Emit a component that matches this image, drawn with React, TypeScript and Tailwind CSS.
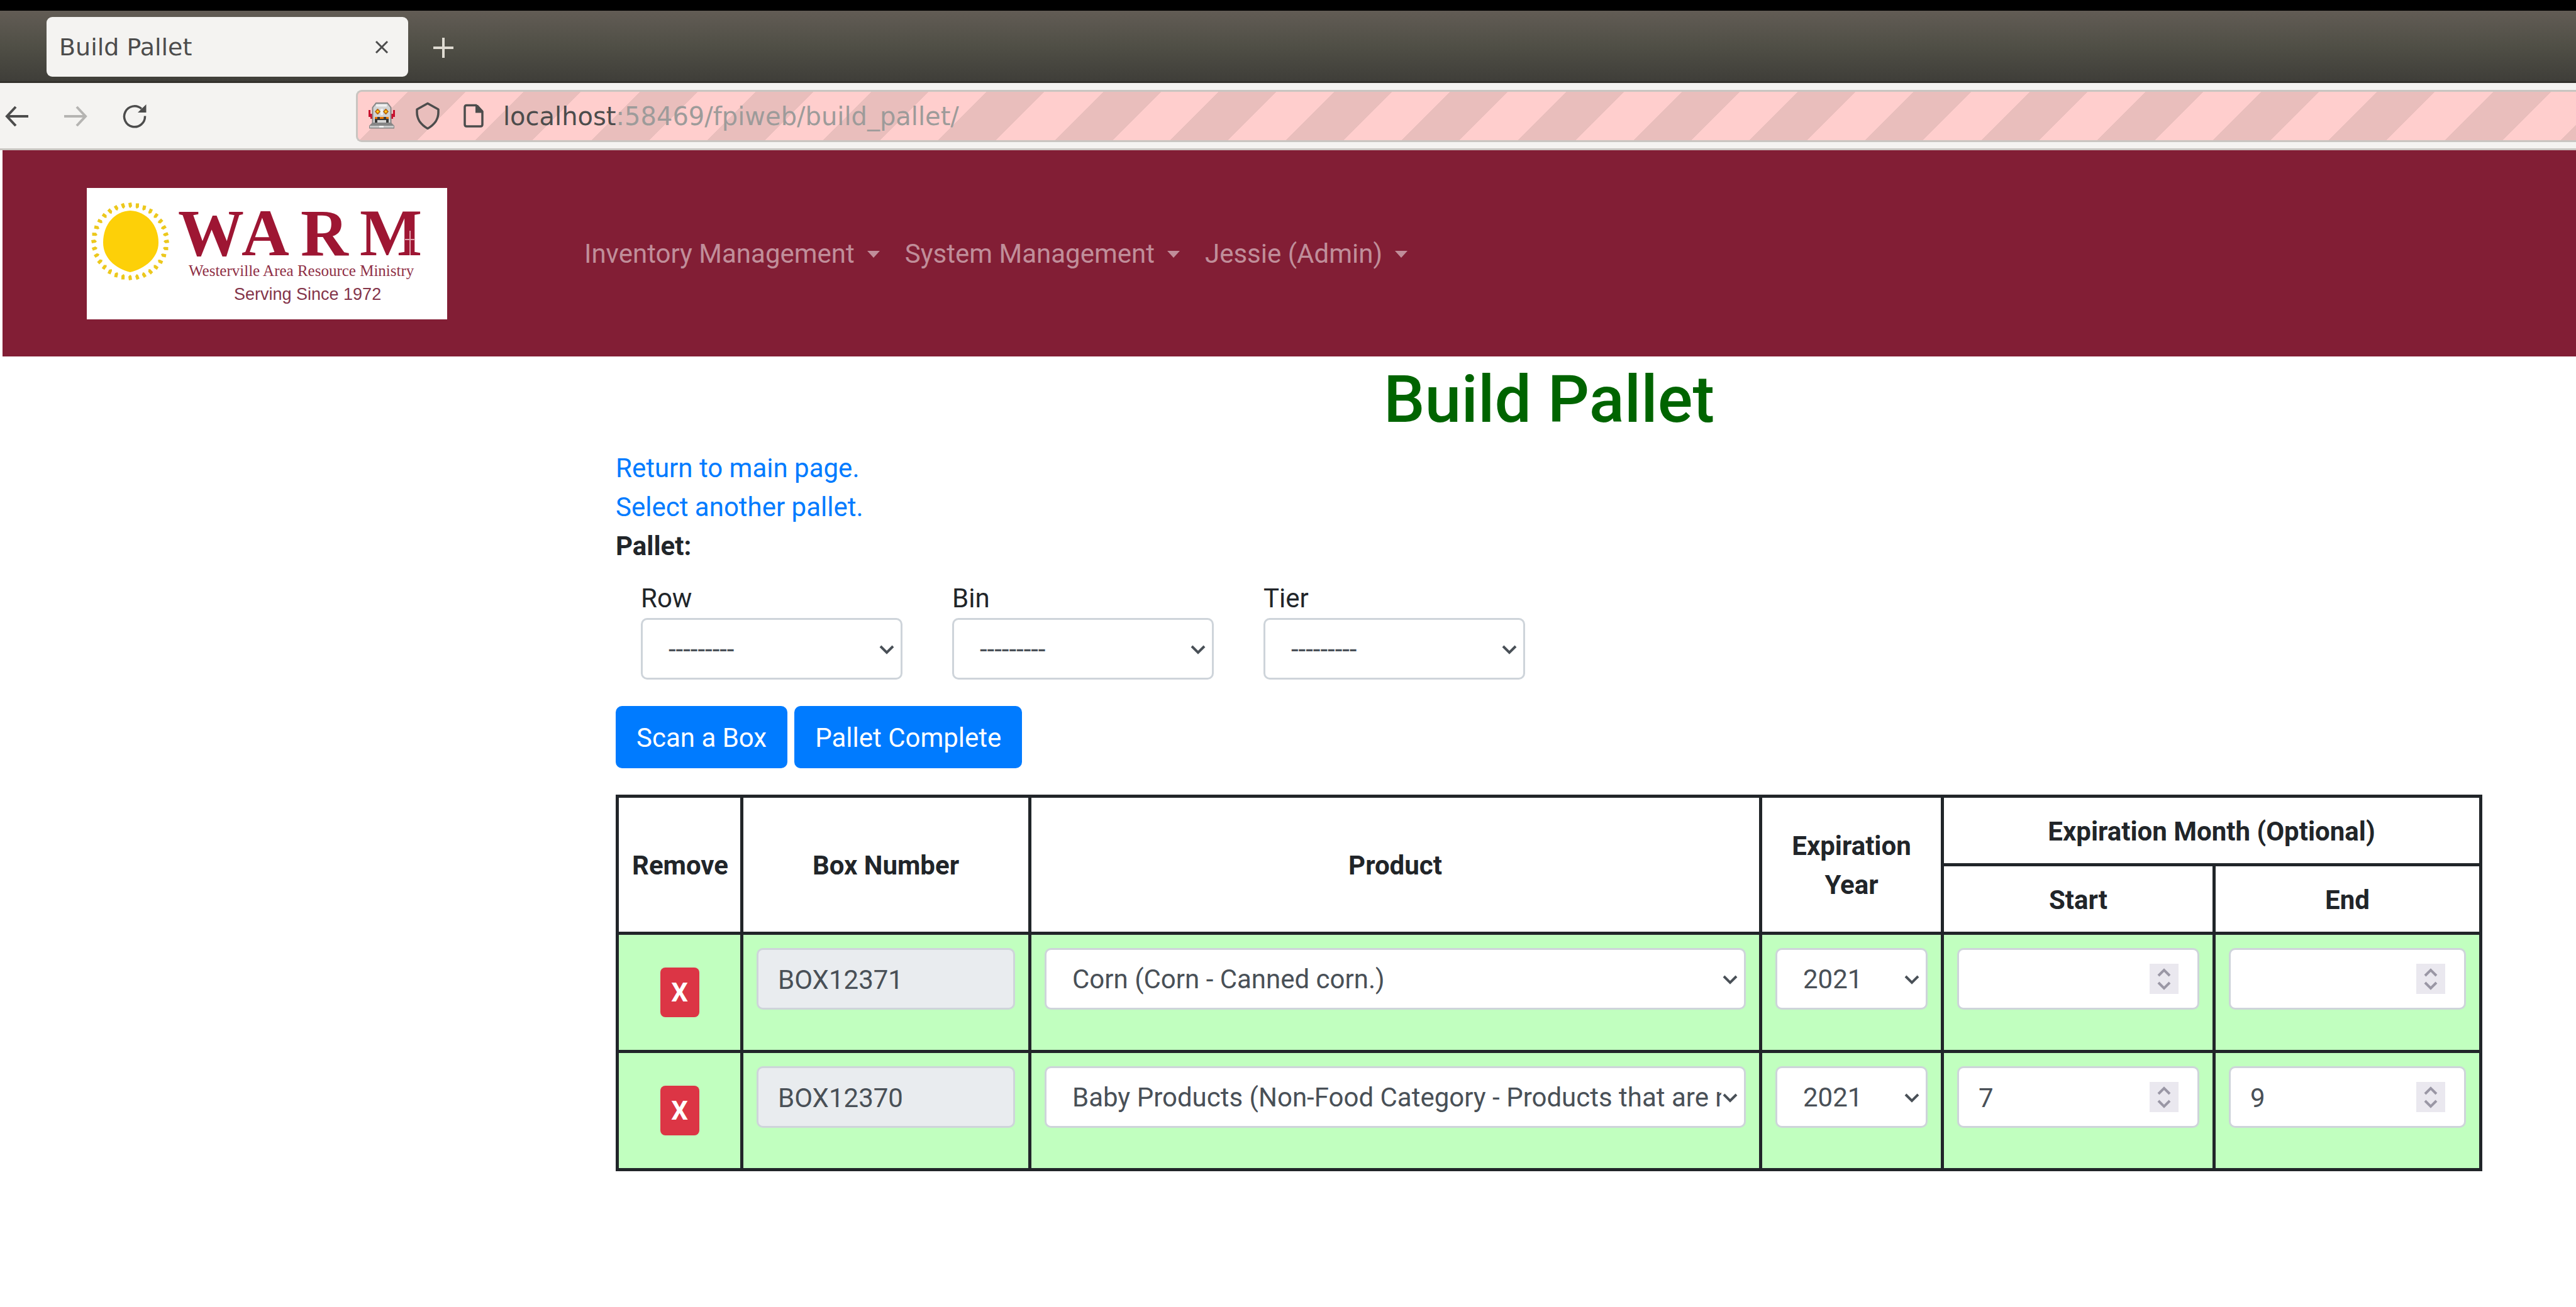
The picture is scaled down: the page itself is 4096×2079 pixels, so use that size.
import type { ReactNode } from "react";

const sans = "font-['Roboto',sans-serif]";

const STRIPES =
  "bg-[repeating-linear-gradient(135deg,#ffcecd_0px,#ffcecd_56px,#e9bebc_56px,#e9bebc_121px,#ffcecd_121px,#ffcecd_186px,#e9bebc_186px,#e9bebc_251px,#ffcecd_251px,#ffcecd_317px,#e9bebc_317px,#e9bebc_382px,#ffcecd_382px,#ffcecd_447px,#e9bebc_447px,#e9bebc_512px,#ffcecd_512px,#ffcecd_521px)]";

function Robot() {
  return (
    <svg viewBox="0 0 42 42" className="h-[42px] w-[42px]" aria-hidden="true">
      <path d="M0 12h3v6h3v8H3v-3H0zM42 12h-3v6h-3v8h3v-3h3z" fill="#c8102e" />
      <path d="M6.500 34V8L12 1h18l5.500 7v26z" fill="#d3d3d3" stroke="#858585" strokeWidth="2" />
      <path d="M12 5h17" stroke="#f2f2f2" strokeWidth="3" />
      <path d="M19 10h4v10h-4z" fill="#f0f0f0" />
      <path d="M14.500 10l4 4.500-4 4.500-4-4.500zM27.500 10l4 4.500-4 4.500-4-4.500z" fill="#d86f00" stroke="#9a5a12" strokeWidth="1" />
      <circle cx="14.500" cy="14.500" r="1.800" fill="#ffd21f" />
      <circle cx="27.500" cy="14.500" r="1.800" fill="#ffd21f" />
      <path d="M10 23h22v9H10z" fill="#3a3a3a" />
      <path d="M10 23h4v3h-4zM18 23h6v3h-6zM28 23h4v3h-4z" fill="#f07800" />
      <path d="M14 28h14v4H14z" fill="#d6d6d6" />
      <path d="M6 32h30l5 5v4.500H1V37z" fill="#868686" />
      <path d="M2 37h38v3H2z" fill="#c9c9c9" />
      <path d="M17 37h7v3h-7z" fill="#f0f0f0" />
    </svg>
  );
}

function BrowserChrome() {
  return (
    <header className="font-['DejaVu_Sans',sans-serif]">
      <div className="h-[17px] bg-black" />
      <div className="flex h-[115px] items-start border-b-3 border-[#33312c] bg-linear-to-b from-[#625c55] via-[#504f46] to-[#3f3e39] pl-[74px] pt-[10px]">
        <div className="flex h-[95px] w-[575px] items-center justify-between rounded-[9px] bg-[#f4f3f1] pl-[20px] pr-[31px] text-[38px] text-[#4c4c4c]">
          <span>Build Pallet</span>
          <button type="button" aria-label="Close tab">
            <svg viewBox="0 0 22 22" className="size-[22px]" fill="none" stroke="#4c4c4c" strokeWidth="3">
              <path d="M2 2l18 18M20 2L2 20" />
            </svg>
          </button>
        </div>
        <button type="button" aria-label="New tab" className="ml-[40px] mt-[33px]">
          <svg viewBox="0 0 32 32" className="size-[32px]" stroke="#dfdbd2" strokeWidth="4">
            <path d="M16 0v32M0 16h32" />
          </svg>
        </button>
      </div>
      <div className="flex h-[107px] items-center border-b-3 border-[#c9c5c1] bg-[#f4f3f1] pl-[8px]">
        <button type="button" aria-label="Back">
          <svg viewBox="0 0 37 34" className="h-[34px] w-[37px]" fill="none" stroke="#4c4c4c" strokeWidth="4">
            <path d="M3 18h34M17 3L3 18l14 15" />
          </svg>
        </button>
        <button type="button" aria-label="Forward" className="ml-[57px]">
          <svg viewBox="0 0 37 34" className="h-[34px] w-[37px]" fill="none" stroke="#b5b4b2" strokeWidth="4">
            <path d="M0 18h34M20 3l14 15-14 15" />
          </svg>
        </button>
        <button type="button" aria-label="Reload" className="ml-[56px]">
          <svg viewBox="0 0 38 40" className="h-[40px] w-[38px]" fill="none">
            <path d="M35.500 20.500A16.500 16.500 0 1 1 30 9" stroke="#4c4c4c" strokeWidth="3.500" />
            <path d="M37.500 2v13H24z" fill="#4c4c4c" />
          </svg>
        </button>
        <div
          className={
            "ml-[333px] flex h-[83px] flex-1 items-center rounded-l-[9px] border-y-3 border-l-3 border-[#c9c5c1] pl-[17px] " +
            STRIPES
          }
        >
          <Robot />
          <svg viewBox="0 0 38 44" className="ml-[33px] h-[44px] w-[38px]" fill="none" stroke="#4c4c4c" strokeWidth="3.500" strokeLinejoin="round" aria-hidden="true">
            <path d="M19 2.500l17 9.500v5q0 7-4 14-5 7-13 11.500Q11 38 6 31 2 24 2 17v-5z" />
          </svg>
          <svg viewBox="0 0 32 38" className="ml-[38px] h-[38px] w-[32px]" fill="none" aria-hidden="true">
            <path d="M5 2.500h15l10 10V33q0 3-3 3H5q-3 0-3-3V5.500q0-3 3-3z" stroke="#4c4c4c" strokeWidth="3.500" />
            <path d="M19 2h4l8 9v3.500H19z" fill="#4c4c4c" />
          </svg>
          <p className="ml-[31px] pt-[2px] text-[40px] leading-[48px] text-[#9d9b9a]">
            <span className="text-[#4c4c4c]">localhost</span>:58469/fpiweb/build_pallet/
          </p>
        </div>
      </div>
    </header>
  );
}

function Logo() {
  const rays = Array.from({ length: 32 }, (_, i) => (i * 360) / 32);
  return (
    <svg viewBox="0 0 573 209" className="h-[209px] w-[573px] bg-white" role="img" aria-label="WARM">
      <g transform="translate(69 85)" fill="#ecc81c">
        <path d="M0-49C26-48 45-26 45 2 45 26 24 43 0 49-24 43-43 26-43 2-43-28-24-48 0-49z" fill="#fdd008" />
        {rays.map((a) => (
          <path key={a} d="M-3-61L2-62 3-56 0-53-2-55z" transform={`rotate(${a})`} />
        ))}
      </g>
      <g fill="#9e1633" fontFamily="Liberation Serif, serif" fontWeight="bold" fontSize="105">
        <text x="145" y="107">W</text>
        <text x="246" y="107">A</text>
        <text x="340" y="107">R</text>
        <text x="434" y="107">M</text>
      </g>
      <path d="M514 68v39M506 82h16" stroke="#e0a0ac" strokeWidth="2" />
      <text x="162" y="140" fill="#8f2f45" fontFamily="Liberation Serif, serif" fontSize="25">
        Westerville Area Resource Ministry
      </text>
      <text x="234" y="178" fill="#84354a" fontFamily="Liberation Sans, sans-serif" fontSize="27">
        Serving Since 1972
      </text>
    </svg>
  );
}

function NavBar() {
  return (
    <nav className="flex h-[328px] items-center bg-[#821e35] pl-[134px]">
      <a href="#home" aria-label="WARM home">
        <Logo />
      </a>
      <ul className="ml-[218px] flex gap-[40px] pt-[2px] text-[42px] leading-[62px] text-[#c08e9a]">
        {["Inventory Management", "System Management", "Jessie (Admin)"].map((label) => (
          <li key={label}>
            <button type="button" className="flex items-center gap-[20px]">
              {label}
              <svg viewBox="0 0 20 11" className="h-[11px] w-[20px]" fill="currentColor" aria-hidden="true">
                <path d="M0 0h20L10 11z" />
              </svg>
            </button>
          </li>
        ))}
      </ul>
    </nav>
  );
}

function Chevron() {
  return (
    <svg viewBox="0 0 24 16" className="pointer-events-none absolute right-[13px] top-[43px] h-[16px] w-[24px]" fill="none" stroke="#495057" strokeWidth="4" aria-hidden="true">
      <path d="M2 2l10 10L22 2" />
    </svg>
  );
}

function Select({ id, label, options }: { id: string; label?: string; options: string[] }) {
  return (
    <div className="relative">
      <select
        id={id}
        aria-label={label}
        className="block h-[98px] w-full appearance-none rounded-[10px] border-3 border-[#ced4da] bg-white pl-[41px] pr-[36px] pt-[2px] text-[#495057]"
      >
        {options.map((o) => (
          <option key={o}>{o}</option>
        ))}
      </select>
      <Chevron />
    </div>
  );
}

function MonthInput({ label, value }: { label: string; value: string }) {
  return (
    <div className="relative">
      <input
        type="number"
        aria-label={label}
        defaultValue={value}
        className="block h-[98px] w-full rounded-[10px] border-3 border-[#ced4da] bg-white px-[31px] pt-[2px] text-[#495057] [appearance:textfield] [&::-webkit-inner-spin-button]:appearance-none"
      />
      <svg viewBox="0 0 46 48" className="pointer-events-none absolute right-[33px] top-[25px] h-[48px] w-[46px] bg-[#eae8ef]" fill="none" stroke="#9a97a5" strokeWidth="4" aria-hidden="true">
        <path d="M14 19l9-9 9 9M14 30l9 9 9-9" />
      </svg>
    </div>
  );
}

function Th({ children, rowSpan, colSpan }: { children: ReactNode; rowSpan?: number; colSpan?: number }) {
  return (
    <th rowSpan={rowSpan} colSpan={colSpan} className="h-[109px] border-5 border-[#212529] px-[21px] pb-0 pt-[3px] text-center align-middle font-bold">
      {children}
    </th>
  );
}

const boxes = [
  { number: "BOX12371", product: "Corn (Corn - Canned corn.)", year: "2021", start: "", end: "" },
  {
    number: "BOX12370",
    product: "Baby Products (Non-Food Category - Products that are not food.)",
    year: "2021",
    start: "7",
    end: "9",
  },
];

const cell = "border-5 border-[#212529] px-[21px] pb-[64px] pt-[21px] align-top";

function BoxTable() {
  return (
    <table className="mt-[42px] w-full table-fixed border-collapse">
      <colgroup>
        <col className="w-[198px]" />
        <col className="w-[458px]" />
        <col />
        <col className="w-[289px]" />
        <col className="w-[432px]" />
        <col className="w-[424px]" />
      </colgroup>
      <thead>
        <tr>
          <Th rowSpan={2}>Remove</Th>
          <Th rowSpan={2}>Box Number</Th>
          <Th rowSpan={2}>Product</Th>
          <Th rowSpan={2}>Expiration Year</Th>
          <Th colSpan={2}>Expiration Month (Optional)</Th>
        </tr>
        <tr>
          <Th>Start</Th>
          <Th>End</Th>
        </tr>
      </thead>
      <tbody className="bg-[#c1ffbf]">
        {boxes.map((b) => (
          <tr key={b.number}>
            <td className="border-5 border-[#212529] p-0 text-center align-middle">
              <button type="button" aria-label={"Remove " + b.number} className="inline-block h-[79px] w-[62px] rounded-[8px] bg-[#dc3545] align-middle font-bold text-white">
                X
              </button>
            </td>
            <td className={cell}>
              <input
                readOnly
                aria-label="Box Number"
                defaultValue={b.number}
                className="block h-[98px] w-full rounded-[10px] border-3 border-[#ced4da] bg-[#e9ecef] px-[31px] pt-[2px] text-[#495057]"
              />
            </td>
            <td className={cell}>
              <Select id={"product-" + b.number} label="Product" options={[b.product]} />
            </td>
            <td className={cell}>
              <Select id={"year-" + b.number} label="Expiration Year" options={[b.year]} />
            </td>
            <td className={cell}>
              <MonthInput label="Expiration Month Start" value={b.start} />
            </td>
            <td className={cell}>
              <MonthInput label="Expiration Month End" value={b.end} />
            </td>
          </tr>
        ))}
      </tbody>
    </table>
  );
}

const primaryButton = "h-[99px] rounded-[10px] bg-[#007bff] px-[33px] pt-[2px] text-white";

export default function App() {
  return (
    <div className={"min-h-screen bg-white text-[42px] leading-[62px] text-[#212529] " + sans}>
      <BrowserChrome />
      <div className="pl-[4px]">
        <NavBar />
        <main className="pb-[60px] pl-[975px] pr-[149px] pt-[6px]">
          <h1 className="mb-[16px] text-center text-[104px] font-medium leading-[125px] text-[#006400]">Build Pallet</h1>
          <div className="flex flex-col items-start">
            <a href="#main" className="text-[#007bff]">Return to main page.</a>
            <a href="#select" className="text-[#007bff]">Select another pallet.</a>
            <strong className="font-bold">Pallet:</strong>
          </div>
          <form className="mt-[21px] flex gap-[79px] pl-[40px]">
            {["Row", "Bin", "Tier"].map((name) => (
              <div key={name} className="w-[416px]">
                <label htmlFor={name} className="block">{name}</label>
                <Select id={name} options={["---------"]} />
              </div>
            ))}
          </form>
          <div className="mt-[42px] flex gap-[11px]">
            <button type="button" className={primaryButton}>Scan a Box</button>
            <button type="button" className={primaryButton}>Pallet Complete</button>
          </div>
          <BoxTable />
        </main>
      </div>
    </div>
  );
}
